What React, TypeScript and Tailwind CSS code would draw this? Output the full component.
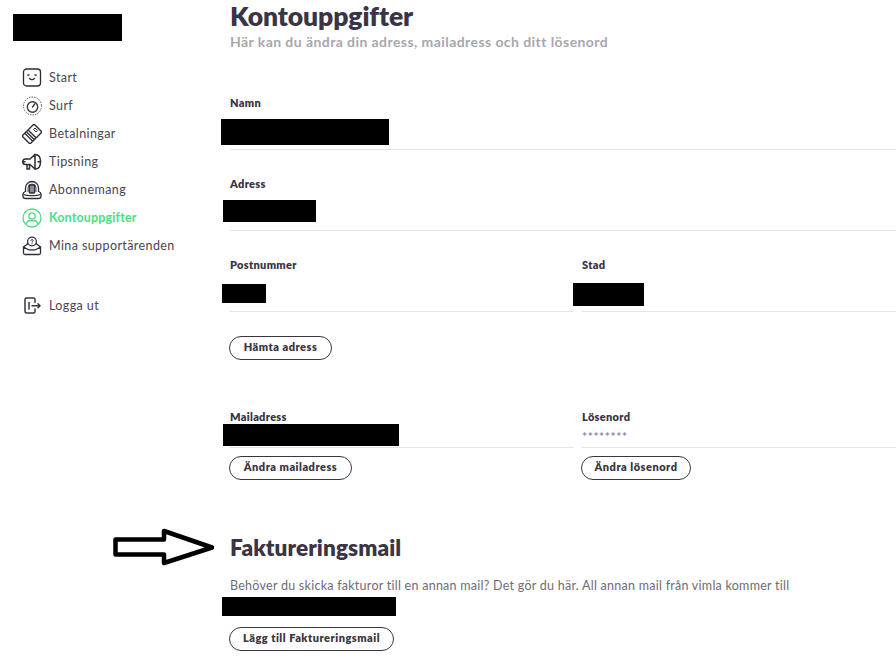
import React from "react";

const ink = "#3a3444";

function IconStart() {
  return (
    <svg width="20" height="20" viewBox="0 0 20 20" fill="none" stroke="#2f2a36" strokeWidth="1.3" strokeLinecap="round">
      <rect x="1.500" y="1" width="17" height="17" rx="3" />
      <path d="M6 7h1M13 7h1" strokeWidth="1.500" />
      <path d="M7.500 10.500c1.400 1.200 3.600 1.200 5 0" />
    </svg>
  );
}
function IconSurf() {
  return (
    <svg width="20" height="20" viewBox="0 0 20 20" fill="none" stroke="#3a3444" strokeWidth="1.400" strokeLinecap="round">
      <circle cx="10.500" cy="10" r="9" strokeDasharray="0.6 2" strokeWidth="0.9" />
      <circle cx="10.500" cy="11" r="5.200" />
      <path d="M10.500 11l2.400-3.200" />
    </svg>
  );
}
function IconCard() {
  return (
    <svg width="20" height="20" viewBox="0 0 20 20" fill="none" stroke="#2f2a36" strokeWidth="1.400" strokeLinejoin="round">
      <path d="M1 11 11 1a1.400 1.400 0 0 1 2 0L19 7a1.400 1.400 0 0 1 0 2L9 19a1.400 1.400 0 0 1-2 0L1 13a1.400 1.400 0 0 1 0-2Z" />
      <path d="M3 9.500l7.500 7.500M4.700 8l7.500 7.500M6.400 6.300l7.500 7.500" strokeWidth="1.300" />
      <path d="M11.500 5.500l1.500-1.500 2.500 2.500L14 8Z" strokeWidth="1" />
    </svg>
  );
}
function IconMega() {
  return (
    <svg width="20" height="20" viewBox="0 0 20 20" fill="none" stroke="#2f2a36" strokeWidth="1.500" strokeLinejoin="round" strokeLinecap="round">
      <path d="M3.500 7h4.500l5-4.500v14.500l-5-4.500H3.500a2.500 2.500 0 0 1 0-5.500Z" />
      <path d="M1 9.700h2" />
      <path d="M5 13v4h2.500v-4" />
      <path d="M13 2.500c4 0 5.500 3.500 5.500 7.200S17 17 13 17" />
      <path d="M16 9.700h2.500" />
    </svg>
  );
}
function IconBox() {
  return (
    <svg width="20" height="20" viewBox="0 0 20 20" fill="none" stroke="#2f2a36" strokeWidth="1.300" strokeLinejoin="round">
      <path d="M3.500 12V8a6.500 6.500 0 0 1 13 0v4" />
      <path d="M6 12V8a4 4 0 0 1 8 0v4" strokeWidth="0.8" />
      <rect x="7.300" y="5" width="5.400" height="8" rx="0.800" fill="#2f2a36" fillOpacity="0.55" />
      <path d="M3.500 11.500C2 12 1 12.800 1 14v2.500c0 1 1 2 3 2h12c2 0 3-1 3-2V14c0-1.200-1-2-2.500-2.500" />
      <path d="M1.500 14.500c3 1.500 14 1.500 17 0" />
    </svg>
  );
}
function IconUser() {
  return (
    <svg width="20" height="20" viewBox="0 0 20 20" fill="none" stroke="#4fdc86" strokeWidth="1.300" strokeLinecap="round">
      <circle cx="10" cy="10" r="9" />
      <circle cx="10" cy="8" r="3.200" />
      <path d="M3.800 16c.8-2.600 3-3.500 6.200-3.500s5.400.9 6.200 3.500" />
    </svg>
  );
}
function IconSupport() {
  return (
    <svg width="20" height="20" viewBox="0 0 20 20" fill="none" stroke="#2f2a36" strokeWidth="1.300" strokeLinejoin="round" strokeLinecap="round">
      <path d="M1.500 11 6 7.500M18.500 11 14 7.500" />
      <path d="M1.500 11v6a1.500 1.500 0 0 0 1.500 1.500h14a1.500 1.500 0 0 0 1.500-1.500v-6l-5 2.800h-7L1.500 11Z" />
      <circle cx="10" cy="5.500" r="4.400" fill="#fff" />
      <path d="M8.800 4.500c.2-1.200 2.400-1.200 2.400.1 0 .9-1.200.9-1.200 1.800M10 7.800v.1" strokeWidth="1" />
    </svg>
  );
}
function IconLogout() {
  return (
    <svg width="20" height="20" viewBox="0 0 20 20" fill="none" stroke="#3a3444" strokeWidth="1.500" strokeLinecap="round" strokeLinejoin="round">
      <path d="M13 6.500V3.500A1.500 1.500 0 0 0 11.500 2h-7A1.500 1.500 0 0 0 3 3.500v12A1.500 1.500 0 0 0 4.500 17h7a1.500 1.500 0 0 0 1.500-1.500V13" />
      <path d="M7 6.500v6.500" />
      <path d="M10 9.700h8M16 7.700l2 2-2 2" />
    </svg>
  );
}

function NavItem({ icon, label, active }: { icon: React.ReactNode; label: string; active?: boolean }) {
  return (
    <div className={`flex h-[28px] items-center gap-[7px] text-[12.5px] ${active ? "font-bold tracking-[0.15px] text-[#4fdc86]" : "tracking-[0.4px] text-[#4a4553]"}`}>
      <span className="flex w-[20px] shrink-0 items-center justify-center">{icon}</span>
      <span>{label}</span>
    </div>
  );
}

function Redact({ className }: { className: string }) {
  return <div className={`absolute bg-black ${className}`} />;
}

function Field({ label, className, children }: { label: string; className?: string; children?: React.ReactNode }) {
  return (
    <div className={`relative border-b border-[#e4e4e4] ${className ?? ""}`}>
      <div className="text-[11px] font-extrabold leading-[14px] tracking-[0.3px] text-[#3a3444]">{label}</div>
      {children}
    </div>
  );
}

function Pill({ children, className }: { children: React.ReactNode; className?: string }) {
  return (
    <button className={`ml-[-1px] flex h-[24px] items-center justify-center rounded-full border border-[#3a3444] bg-white pb-[1px] text-[11px] font-extrabold tracking-[0.5px] text-[#3a3444] ${className ?? ""}`}>
      {children}
    </button>
  );
}

export default function App() {
  return (
    <div
      className="relative flex h-[671px] w-[896px] overflow-hidden bg-white"
      style={{ fontFamily: '"Lato", "Noto Sans", sans-serif', color: ink }}
    >
      <aside className="w-[230px] shrink-0 pl-[22px] pt-[64px]">
        <div className="absolute left-[13px] top-[14px] h-[27px] w-[109px] bg-black" />
        <NavItem icon={<IconStart />} label="Start" />
        <NavItem icon={<IconSurf />} label="Surf" />
        <NavItem icon={<IconCard />} label="Betalningar" />
        <NavItem icon={<IconMega />} label="Tipsning" />
        <NavItem icon={<IconBox />} label="Abonnemang" />
        <NavItem icon={<IconUser />} label="Kontouppgifter" active />
        <NavItem icon={<IconSupport />} label="Mina supportärenden" />
        <div className="mt-[32px]">
          <NavItem icon={<IconLogout />} label="Logga ut" />
        </div>
      </aside>

      <main className="flex-1">
        <h1 className="pt-[1px] text-[26.500px] font-extrabold leading-[31px] tracking-[-0.1px] text-[#3a3444]">Kontouppgifter</h1>
        <p className="text-[14px] font-bold leading-[20px] tracking-[0.43px] text-[#a9a6ad]">
          Här kan du ändra din adress, mailadress och ditt lösenord
        </p>

        <Field label="Namn" className="mt-[44px] h-[54px]">
          <Redact className="-left-[9px] top-[23px] h-[26px] w-[168px]" />
        </Field>
        <Field label="Adress" className="mt-[27px] h-[54px]">
          <Redact className="-left-[7px] top-[23px] h-[22px] w-[93px]" />
        </Field>

        <div className="mt-[27px] flex gap-[8px]">
          <Field label="Postnummer" className="h-[54px] w-[344px]">
            <Redact className="-left-[8px] top-[26px] h-[19px] w-[44px]" />
          </Field>
          <Field label="Stad" className="h-[54px] flex-1">
            <Redact className="-left-[9px] top-[25px] h-[23px] w-[71px]" />
          </Field>
        </div>

        <Pill className="mt-[24px] w-[103px]">Hämta adress</Pill>

        <div className="mt-[50px] flex gap-[8px]">
          <Field label="Mailadress" className="h-[38px] w-[344px]">
            <Redact className="-left-[7px] top-[14px] h-[22px] w-[176px]" />
          </Field>
          <Field label="Lösenord" className="h-[38px] flex-1">
            <div className="mt-[6px] text-[12px] font-bold leading-[14px] tracking-[0.6px] text-[#8c88a8]">********</div>
          </Field>
        </div>

        <div className="mt-[8px] flex gap-[8px]">
          <div className="w-[344px]">
            <Pill className="w-[123px]">Ändra mailadress</Pill>
          </div>
          <Pill className="w-[110px]">Ändra lösenord</Pill>
        </div>

        <h2 className="mt-[55px] text-[22.500px] font-extrabold leading-[26px] tracking-[0.1px] text-[#3a3444]">Faktureringsmail</h2>
        <div className="relative mt-[16px]">
          <p className="whitespace-nowrap text-[12.5px] leading-[18px] tracking-[0.26px] text-[#6f6b76]">
            Behöver du skicka fakturor till en annan mail? Det gör du här. All annan mail från vimla kommer till
          </p>
          <div className="ml-[-8px] mt-[2px] h-[19px] w-[174px] bg-black" />
        </div>
        <Pill className="mt-[11px] w-[165px]">Lägg till Faktureringsmail</Pill>
      </main>

      <svg className="absolute left-[112px] top-[527px]" width="106" height="40" viewBox="0 0 106 40" fill="none" stroke="#000" strokeWidth="4.500" strokeLinejoin="round">
        <path d="M3.500 12.500H52V4L100 20.500 52 36V27.500H3.500Z" />
      </svg>
    </div>
  );
}
